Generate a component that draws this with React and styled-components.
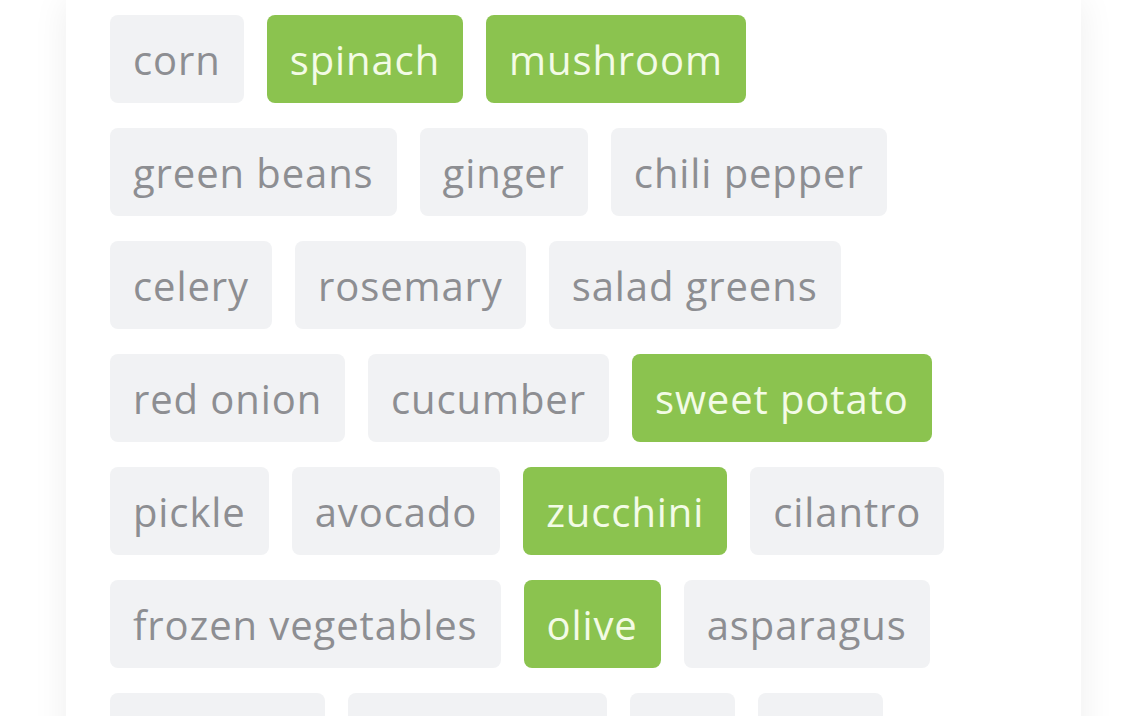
import React from "react";
import styled, { createGlobalStyle } from "styled-components";

const GlobalStyle = createGlobalStyle`
  html, body {
    margin: 0;
    padding: 0;
    background: #ffffff;
    font-family: "Open Sans", "Liberation Sans", sans-serif;
  }
`;

const Page = styled.div`
  width: 1146px;
  height: 716px;
  overflow: hidden;
  background: #ffffff;
  display: flex;
`;

const Card = styled.section`
  margin-left: 66px;
  width: 1015px;
  min-height: 760px;
  background: #ffffff;
  box-shadow: 0 0 34px rgba(0, 0, 0, 0.07);
  padding: 15px 44px 0;
  box-sizing: border-box;
  display: flex;
  flex-direction: column;
  gap: 25px;
`;

const TagRow = styled.ul`
  list-style: none;
  margin: 0;
  padding: 0;
  display: flex;
  gap: 23px;
`;

const Tag = styled.li`
  height: 88px;
  padding: 0 23px;
  display: flex;
  align-items: center;
  border-radius: 8px;
  font-size: 40px;
  letter-spacing: 0.9px;
  background: ${(p) => (p.$active ? "#8bc34f" : "#f1f2f4")};
  color: ${(p) => (p.$active ? "#f3fbe6" : "#8d8e92")};
  white-space: nowrap;
`;

// grouped the way the list wraps on this card
const rows = [
  [{ name: "corn" }, { name: "spinach", active: true }, { name: "mushroom", active: true }],
  [{ name: "green beans" }, { name: "ginger" }, { name: "chili pepper" }],
  [{ name: "celery" }, { name: "rosemary" }, { name: "salad greens" }],
  [{ name: "red onion" }, { name: "cucumber" }, { name: "sweet potato", active: true }],
  [{ name: "pickle" }, { name: "avocado" }, { name: "zucchini", active: true }, { name: "cilantro" }],
  [{ name: "frozen vegetables" }, { name: "olive", active: true }, { name: "asparagus" }],
  [{ name: "eggplant" }, { name: "cauliflower" }, { name: "dill" }, { name: "leek" }],
];

export default function App() {
  return (
    <>
      <GlobalStyle />
      <Page>
        <Card>
          {rows.map((row, i) => (
            <TagRow key={i}>
              {row.map((veg) => (
                <Tag key={veg.name} $active={veg.active}>
                  {veg.name}
                </Tag>
              ))}
            </TagRow>
          ))}
        </Card>
      </Page>
    </>
  );
}
